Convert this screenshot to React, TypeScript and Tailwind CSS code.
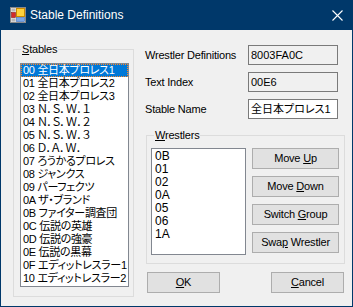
import { ReactNode } from 'react';

const STABLES = [
  '00 全日本プロレス1',
  '01 全日本プロレス2',
  '02 全日本プロレス3',
  '03 Ｎ．Ｓ．Ｗ．１',
  '04 Ｎ．Ｓ．Ｗ．２',
  '05 Ｎ．Ｓ．Ｗ．３',
  '06 Ｄ．Ａ．Ｗ．',
  '07 ろうかるプロレス',
  '08 ジャンクス',
  '09 パーフェクツ',
  '0A ザ・ブランド',
  '0B ファイター調査団',
  '0C 伝説の英雄',
  '0D 伝説の強豪',
  '0E 伝説の黒幕',
  '0F エディットレスラー1',
  '10 エディットレスラー2',
];

const WRESTLERS = ['0B', '01', '02', '0A', '05', '06', '1A'];

// label with one underlined access key, WinForms style
function Mn({ text, at }: { text: string; at: number }) {
  return (
    <>
      {text.slice(0, at)}
      <span className="underline underline-offset-[1px]">{text[at]}</span>
      {text.slice(at + 1)}
    </>
  );
}

function GroupBox({ label, className, children }: { label: ReactNode; className: string; children: ReactNode }) {
  return (
    <fieldset className={`border border-[#dcdcdc] ${className}`}>
      <legend className="ml-[7px] px-[1px] text-[11px] leading-[13px] tracking-[-0.2px]">{label}</legend>
      {children}
    </fieldset>
  );
}

function Button({ children, className = '' }: { children: ReactNode; className?: string }) {
  return (
    <button className={`h-[21px] bg-[#e1e1e1] border border-[#adadad] text-[11px] leading-[13px] tracking-[-0.2px] text-black ${className}`}>
      {children}
    </button>
  );
}

function Field({ label, value, editable }: { label: string; value: string; editable?: boolean }) {
  return (
    <div className="flex items-center h-[20px]">
      <span className="w-[103px] text-[11px] tracking-[-0.2px]">{label}</span>
      <div
        className={`w-[90px] h-[20px] border border-[#7a7a7a] pl-[2px] flex items-center whitespace-nowrap overflow-hidden text-[11px] [font-feature-settings:'palt'] ${
          editable ? 'bg-white' : 'bg-[#f0f0f0]'
        }`}
      >
        {value}
      </div>
    </div>
  );
}

function TitleIcon() {
  return (
    <svg width="16" height="16" viewBox="0 0 16 16">
      <rect x="0.5" y="0.5" width="15" height="15" fill="#e9e9e9" stroke="#8a8a8a" />
      <rect x="1.5" y="1.5" width="4" height="3" fill="#b8b8b8" />
      <rect x="1.5" y="5.5" width="4" height="5" fill="#d42a2a" stroke="#8a1a1a" strokeWidth="0.6" />
      <rect x="1.5" y="11.5" width="4" height="3" fill="#b8b8b8" />
      <rect x="6.5" y="1.5" width="8" height="8" fill="#ffd23c" stroke="#c98a00" />
      <rect x="6.5" y="10.5" width="8" height="4" fill="#7aa6e6" stroke="#3d6fbf" strokeWidth="0.6" />
    </svg>
  );
}

export default function App() {
  return (
    <div className="w-[353px] h-[307px] flex flex-col bg-[#00386a] font-['Liberation_Sans','Noto_Sans_CJK_JP',sans-serif] text-black">
      {/* Title bar */}
      <div className="h-[30px] flex items-center pl-[10px] text-white">
        <TitleIcon />
        <span className="ml-[4px] text-[12px] leading-[14px]">Stable Definitions</span>
        <svg className="ml-auto mr-[10px]" width="11" height="11" viewBox="0 0 11 11">
          <path d="M0.5 0.5 L10.5 10.5 M10.5 0.5 L0.5 10.5" stroke="white" strokeWidth="1.1" />
        </svg>
      </div>

      {/* Client area */}
      <div className="flex-1 mx-[1px] mb-[1px] bg-[#f0f0f0] flex items-start pl-[12px]">
        <GroupBox label={<Mn text="Stables" at={0} />} className="mt-[13px] w-[121px] h-[254px]">
          <div className="pl-[6px] pt-[7px]">
            <div className="w-[109px] h-[224px] bg-white border border-[#828790] text-[11px] leading-[13px] tracking-[-0.3px] [font-feature-settings:'palt'] overflow-hidden">
              {STABLES.map((s, i) => (
                <div
                  key={s}
                  className={`h-[13px] pl-[2px] whitespace-nowrap ${
                    i === 0 ? 'bg-[#0078d7] text-white outline-1 outline-dotted outline-[#ff8728] -outline-offset-1' : ''
                  }`}
                >
                  {s}
                </div>
              ))}
            </div>
          </div>
        </GroupBox>

        <div className="ml-[11px] mt-[15px] flex flex-col">
          <div className="flex flex-col gap-[7px]">
            <Field label="Wrestler Definitions" value="8003FA0C" />
            <Field label="Text Index" value="00E6" />
            <Field label="Stable Name" value="全日本プロレス1" editable />
          </div>

          <GroupBox label={<Mn text="Wrestlers" at={0} />} className="ml-[1px] mt-[10px] w-[199px] h-[135px]">
            <div className="pl-[4px] pt-[6px] flex gap-[6px]">
              <div className="w-[95px] h-[107px] bg-white border border-[#828790] pt-[1px] pl-[3px] text-[12px] leading-[13px]">
                {WRESTLERS.map(w => (
                  <div key={w} className="h-[13px]">{w}</div>
                ))}
              </div>
              <div className="w-[87px] flex flex-col gap-[7px]">
                <Button><Mn text="Move Up" at={5} /></Button>
                <Button><Mn text="Move Down" at={5} /></Button>
                <Button><Mn text="Switch Group" at={7} /></Button>
                <Button><Mn text="Swap Wrestler" at={3} /></Button>
              </div>
            </div>
          </GroupBox>

          <div className="ml-[2px] mt-[8px] w-[197px] flex justify-between">
            <Button className="w-[73px]"><Mn text="OK" at={0} /></Button>
            <Button className="w-[73px]"><Mn text="Cancel" at={0} /></Button>
          </div>
        </div>
      </div>
    </div>
  );
}
